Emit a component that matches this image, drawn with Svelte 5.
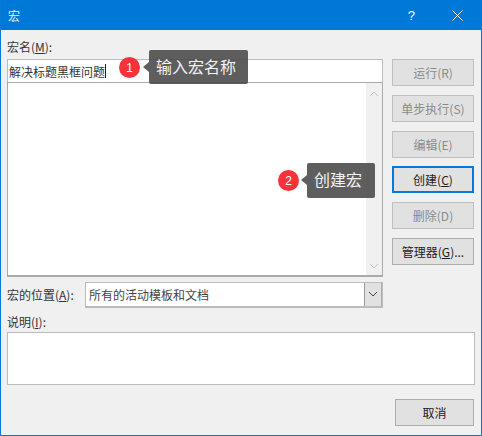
<script>
  const buttons = [
    { text: '运行(', key: 'R', off: true },
    { text: '单步执行(', key: 'S', off: true },
    { text: '编辑(', key: 'E', off: true },
    { text: '创建(', key: 'C', focus: true },
    { text: '删除(', key: 'D', off: true },
    { text: '管理器(', key: 'G', tail: ')...' }
  ];
</script>

<div class="win">
  <header class="title">
    <span class="name">宏</span>
    <span class="help">?</span>
    <svg class="close" width="11" height="11" viewBox="0 0 11 11"><path d="M.5 .5l10 10M10.5 .5l-10 10" stroke="#fff" stroke-width="1" fill="none"/></svg>
  </header>
  <div class="body">
    <div class="top">
      <div class="left">
        <div class="lab first">宏名(<u>M</u>):</div>
        <div class="input"><span>解决标题黑框问题</span><i class="caret"></i></div>
        <div class="list">
          <div class="sb">
            <svg width="10" height="6" viewBox="0 0 10 6"><path d="M1 5l4-4 4 4" stroke="#c4c4c4" fill="none"/></svg>
            <svg width="10" height="6" viewBox="0 0 10 6"><path d="M1 1l4 4 4-4" stroke="#c4c4c4" fill="none"/></svg>
          </div>
        </div>
        <div class="loc">
          <span class="lab">宏的位置(<u>A</u>):</span>
          <div class="combo">
            <span class="val">所有的活动模板和文档</span>
            <span class="drop"><svg width="10" height="6" viewBox="0 0 10 6"><path d="M1 1l4 4 4-4" stroke="#444" fill="none"/></svg></span>
          </div>
        </div>
      </div>
      <div class="btns">
        {#each buttons as b}
          <button class:off={b.off} class:focus={b.focus}>{b.text}<span class="k">{b.key}</span>{b.tail ?? ')'}</button>
        {/each}
      </div>
    </div>
    <div class="lab desc">说明(<u>I</u>):</div>
    <div class="area"></div>
    <div class="foot"><button class="cancel">取消</button></div>
  </div>

  <span class="badge b1">1</span>
  <div class="tip t1">输入宏名称</div>
  <span class="badge b2">2</span>
  <div class="tip t2">创建宏</div>
</div>

<style>
  :global(body) { margin: 0; background: #f0f0f0; }
  .win {
    position: relative; width: 482px; height: 436px; box-sizing: border-box;
    background: #f0f0f0; border: 1px solid #0a78d7; border-top: 0;
    font-family: "Noto Sans CJK SC", "Liberation Sans", sans-serif;
    font-size: 12px; color: #333; overflow: hidden;
  }
  .title {
    height: 30px; background: #0078d7; color: #fff; display: flex; align-items: center;
    padding: 0 19px 0 8px; margin: 0 -1px;
  }
  .name { font-size: 12px; flex: 1; color: #e8f3fc; }
  .help { font-family: "Liberation Sans", sans-serif; font-size: 13px; margin-right: 37px; }
  .close { display: block; }
  .body { padding: 0 6px 0 6px; }
  .top { display: flex; gap: 9px; align-items: flex-start; }
  .left { width: 376px; }
  .lab { line-height: 17px; color: #333; }
  .first { margin-top: 8px; height: 21px; }
  .input {
    height: 23px; box-sizing: border-box; background: #fff; border: 1px solid #bcbcbc; border-bottom: 0;
    padding-left: 1px; line-height: 21px; color: #333; font-size: 12px; display: flex; align-items: center;
  }
  .caret { flex: none; width: 1px; height: 14px; background: #222; }
  .list {
    height: 195px; box-sizing: border-box; background: #fff; border: 1px solid #aaa; border-bottom-width: 2px;
    display: flex; justify-content: flex-end;
  }
  .sb {
    width: 16px; background: #f0f0f0; display: flex; flex-direction: column; justify-content: space-between;
    align-items: center; padding: 8px 0 6px;
  }
  .sb svg { display: block; }
  .loc { display: flex; align-items: center; margin-top: 5px; height: 25px; }
  .loc .lab { width: 78px; }
  .combo {
    flex: 1; height: 26px; box-sizing: border-box; background: #fff; border: 1px solid #bcbcbc;
    border-bottom-width: 2px; display: flex; align-items: stretch;
  }
  .val { flex: 1; padding-left: 3px; line-height: 24px; color: #444; }
  .drop {
    width: 16px; background: #e1e1e1; border-left: 1px solid #9a9a9a; border-right: 1px solid #adadad;
    display: flex; align-items: center; justify-content: center;
  }
  .btns { display: flex; flex-direction: column; padding-top: 29px; gap: 8.8px; }
  button {
    width: 82px; height: 27px; box-sizing: border-box; background: #e1e1e1; border: 1px solid #adadad;
    font: inherit; font-size: 12px; color: #222; padding: 0; white-space: nowrap;
  }
  .off { color: #8a8a8a; border-color: #bfbfbf; }
  .focus { border: 2px solid #0a78d7; }
  .k { text-decoration: underline; }
  .off .k { text-decoration: none; }
  .desc { margin-top: 6px; height: 19px; line-height: 17px; }
  .area { height: 53px; width: 468px; box-sizing: border-box; background: #fff; border: 1px solid #bcbcbc; }
  .foot { display: flex; justify-content: flex-end; margin-top: 14px; padding-right: 1px; }
  .cancel { width: 79px; }
  .badge {
    position: absolute; width: 21px; height: 21px; border-radius: 50%; background: #f8323a; color: #fff;
    font-family: "Liberation Sans", sans-serif; font-size: 12px; display: flex; align-items: center; justify-content: center;
  }
  .b1 { left: 118px; top: 57px; }
  .b2 { left: 277px; top: 170px; }
  .tip {
    position: absolute; background: rgba(72,72,72,.88); color: #f2f2f2; border-radius: 2px; height: 34px;
    line-height: 33px; font-size: 16px; box-sizing: border-box; padding-left: 7px;
  }
  .tip::before {
    content: ""; position: absolute; left: -6px; top: 12px; border: 5px solid transparent; border-left: 0;
    border-right: 6px solid rgba(72,72,72,.88);
  }
  .t1 { left: 148px; top: 50px; width: 99px; }
  .t2 { left: 306px; top: 163px; width: 68px; height: 35px; }
</style>
